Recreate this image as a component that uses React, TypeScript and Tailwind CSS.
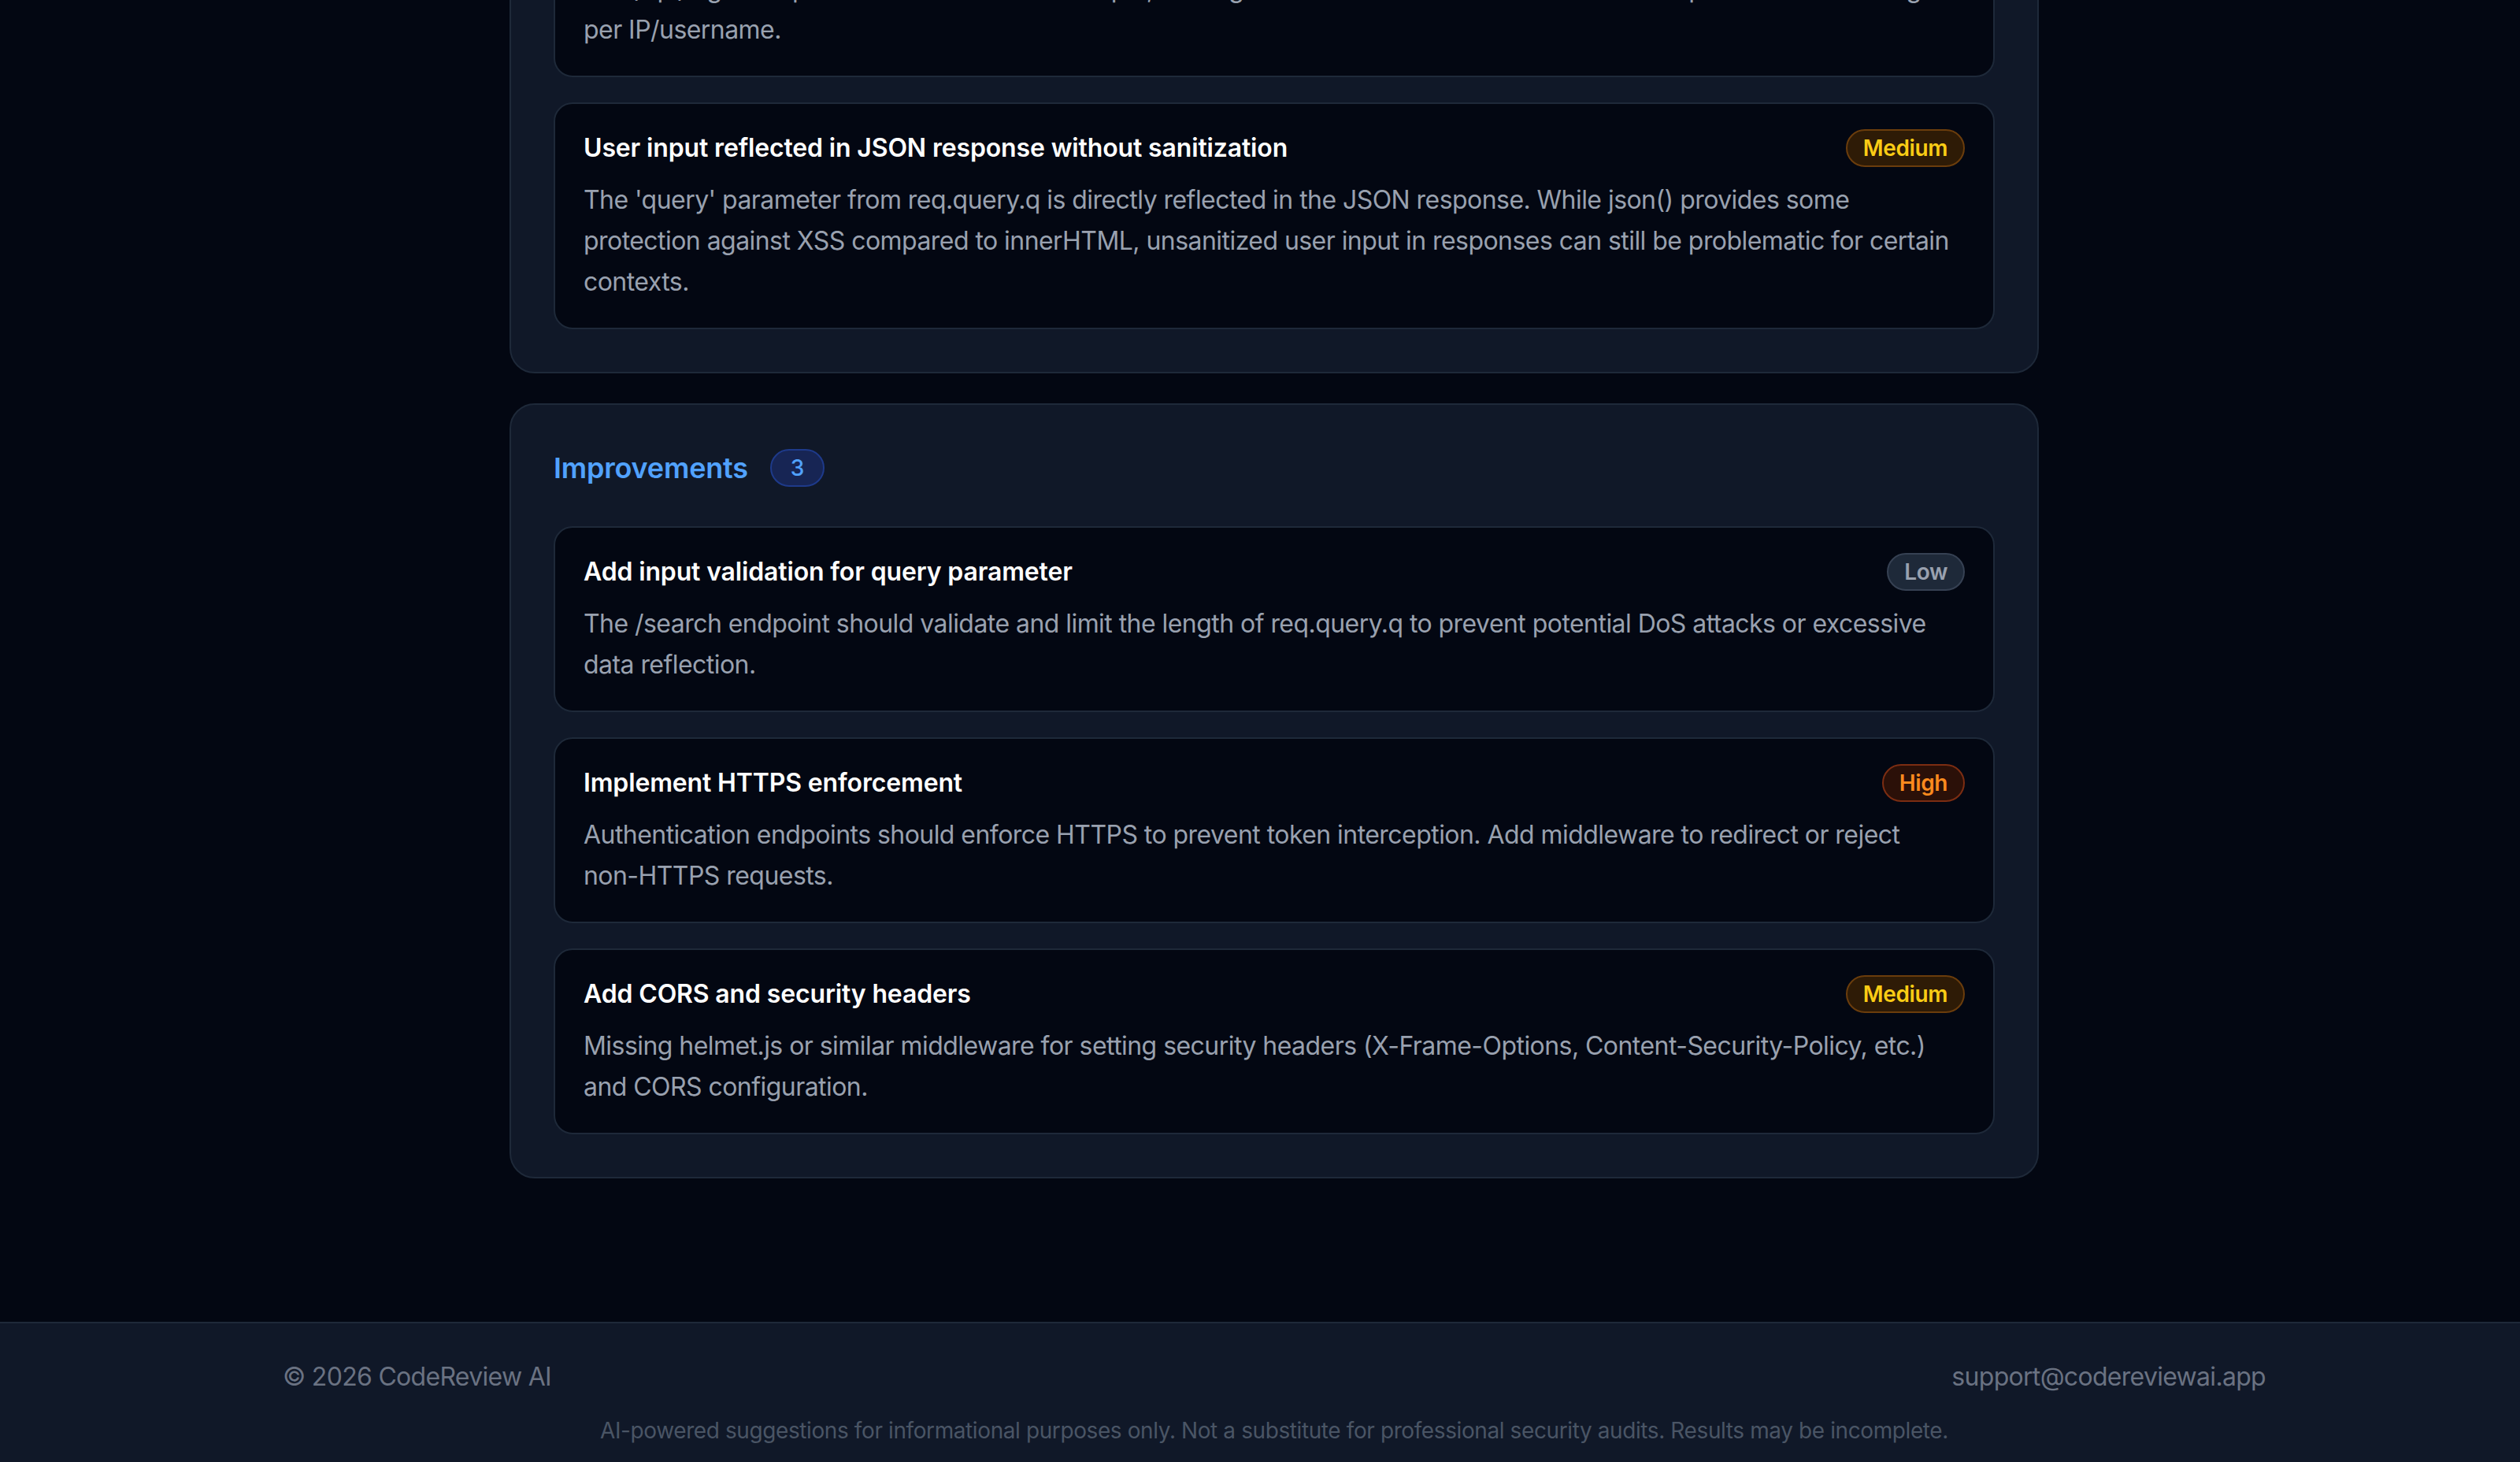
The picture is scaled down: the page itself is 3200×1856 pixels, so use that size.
import type { ReactNode } from 'react';

type Severity = 'Low' | 'Medium' | 'High';

type Finding = {
  title: string;
  description: ReactNode;
  severity: Severity;
};

const severityStyles: Record<Severity, string> = {
  Low: 'border-gray-700 bg-gray-800 text-gray-400',
  Medium: 'border-[#6b3d0c] bg-[#2e1b06] text-[#facc15]',
  High: 'border-[#7c2d12] bg-[#2b1008] text-[#fb8a1e]',
};

const issues: Finding[] = [
  {
    title: 'No rate limiting on authentication endpoints',
    description:
      'The /api/login endpoint allows unlimited attempts, making it vulnerable to brute-force attacks. Implement rate limiting per IP/username.',
    severity: 'High',
  },
  {
    title: 'User input reflected in JSON response without sanitization',
    description:
      "The 'query' parameter from req.query.q is directly reflected in the JSON response. While json() provides some protection against XSS compared to innerHTML, unsanitized user input in responses can still be problematic for certain contexts.",
    severity: 'Medium',
  },
];

const improvements: Finding[] = [
  {
    title: 'Add input validation for query parameter',
    description:
      'The /search endpoint should validate and limit the length of req.query.q to prevent potential DoS attacks or excessive data reflection.',
    severity: 'Low',
  },
  {
    title: 'Implement HTTPS enforcement',
    description: (
      <>
        Authentication endpoints should enforce HTTPS to prevent token interception. Add middleware to
        redirect or reject <span className="whitespace-nowrap">non-HTTPS</span> requests.
      </>
    ),
    severity: 'High',
  },
  {
    title: 'Add CORS and security headers',
    description:
      'Missing helmet.js or similar middleware for setting security headers (X-Frame-Options, Content-Security-Policy, etc.) and CORS configuration.',
    severity: 'Medium',
  },
];

function SeverityBadge({ level }: { level: Severity }) {
  return (
    <span
      className={`inline-flex h-12 shrink-0 items-center rounded-full border-2 px-5 text-[28px] font-semibold tracking-[-0.4px] ${severityStyles[level]}`}
    >
      {level}
    </span>
  );
}

function FindingCard({ item }: { item: Finding }) {
  return (
    <div className="rounded-3xl border-2 border-gray-800 bg-gray-950 px-[36px] py-8">
      <div className="flex items-center justify-between gap-8">
        <h3 className="text-[32px] leading-[48px] font-semibold tracking-[-0.15px] text-white">
          {item.title}
        </h3>
        <SeverityBadge level={item.severity} />
      </div>
      <p className="mt-4 text-[32px] leading-[52px] tracking-[-0.55px] text-gray-400">
        {item.description}
      </p>
    </div>
  );
}

function FindingSection({
  title,
  titleColor,
  countStyle,
  items,
  className = '',
}: {
  title: string;
  titleColor: string;
  countStyle: string;
  items: Finding[];
  className?: string;
}) {
  return (
    <section
      className={`rounded-[32px] border-2 border-gray-800 bg-gray-900 px-[54px] pt-[52px] pb-[54px] ${className}`}
    >
      <div className="mb-[46px] flex h-14 items-center gap-7">
        <h2 className={`text-[36px] leading-[56px] font-semibold tracking-[-0.2px] ${titleColor}`}>
          {title}
        </h2>
        <span
          className={`inline-flex h-12 items-center rounded-full border-2 px-6 text-[28px] font-medium ${countStyle}`}
        >
          {items.length}
        </span>
      </div>
      <div className="flex flex-col gap-8">
        {items.map((item) => (
          <FindingCard key={item.title} item={item} />
        ))}
      </div>
    </section>
  );
}

export default function App() {
  return (
    <div className="min-h-screen overflow-hidden bg-gray-950 font-['Inter','Noto_Sans',sans-serif] antialiased">
      {/* review results, scrolled down to the bottom of the report */}
      <div className="pl-[36px]">
        <main className="mx-auto -mt-[294px] w-[1942px]">
          <FindingSection
            title="Security Issues"
            titleColor="text-red-400"
            countStyle="border-[#7f1d1d] bg-[#2a0f0f] text-red-400"
            items={issues}
          />
          <FindingSection
            title="Improvements"
            titleColor="text-blue-400"
            countStyle="border-[#1e3a8a] bg-[#172554] text-blue-400"
            items={improvements}
            className="mt-[38px]"
          />
        </main>
      </div>

      <footer className="mt-[182px] border-t-2 border-gray-800 bg-gray-900 pt-[44px] pb-12">
        <div className="pl-[36px]">
          <div className="mx-auto w-[2518px]">
            <div className="flex items-center justify-between text-[32px] leading-[48px] tracking-[-0.7px] text-gray-500">
              <span>© 2026 CodeReview AI</span>
              <span>support@codereviewai.app</span>
            </div>
            <p className="mt-6 text-center text-[28px] leading-10 tracking-[-0.4px] text-gray-600">
              AI-powered suggestions for informational purposes only. Not a substitute for professional
              security audits. Results may be incomplete.
            </p>
          </div>
        </div>
      </footer>
    </div>
  );
}
